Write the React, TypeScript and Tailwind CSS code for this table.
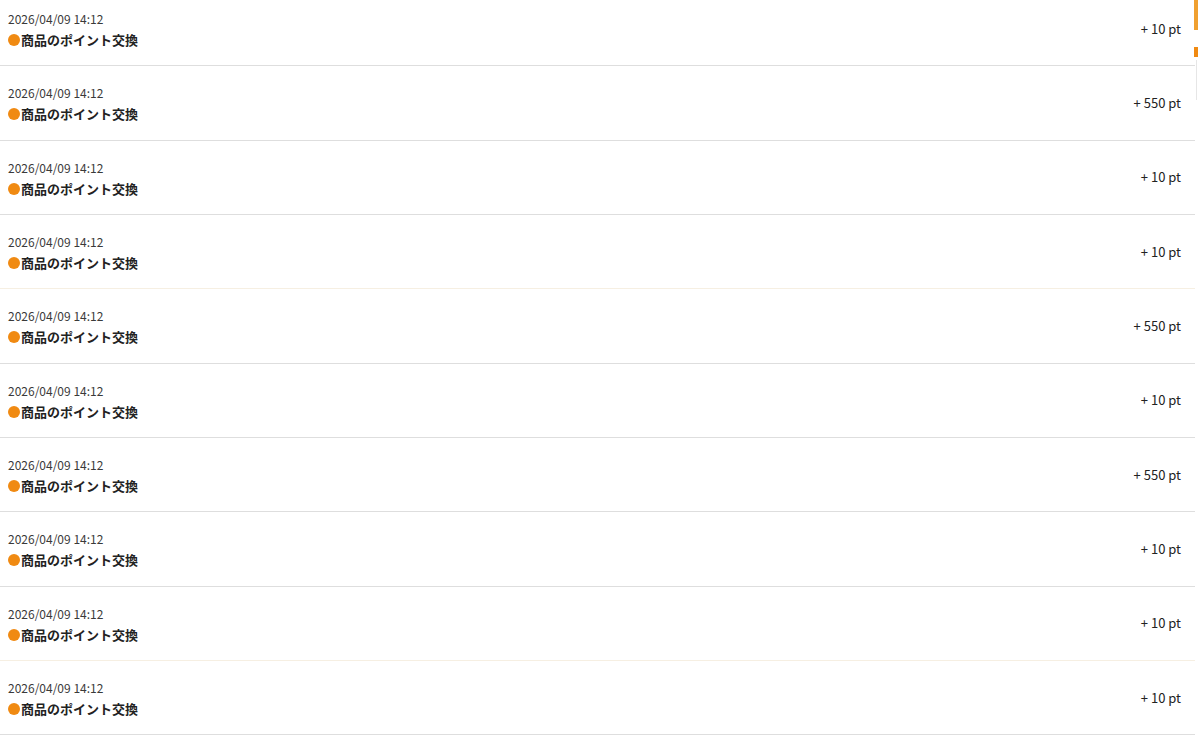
import React from "react";

const rows = [
  { v: "10", line: "border-[#dedede]" },
  { v: "550", line: "border-[#dedede]" },
  { v: "10", line: "border-[#dedede]" },
  { v: "10", line: "border-[#f6efe2]" },
  { v: "550", line: "border-[#dedede]" },
  { v: "10", line: "border-[#dedede]" },
  { v: "550", line: "border-[#dedede]" },
  { v: "10", line: "border-[#dedede]" },
  { v: "10", line: "border-[#f6efe2]" },
  { v: "10", line: "border-[#dedede]" },
];

export default function App() {
  return (
    <div
      className="relative h-[743px] w-[1200px] overflow-hidden bg-white"
      style={{ fontFamily: '"Noto Sans CJK JP", "Noto Sans", sans-serif' }}
    >
      <div className="-mt-[8px] flex w-[1195px] flex-col">
        {rows.map((r, i) => (
          <div
            key={i}
            className={`flex h-[74.33px] shrink-0 items-start justify-between border-b ${r.line} pl-[8px] pr-[14px]`}
          >
            <div className="flex flex-col pt-[19px]">
              <div className="text-[12px] leading-[16px] text-[#3a3a3a]">2026/04/09 14:12</div>
              <div className="mt-[3px] flex items-center text-[13px] font-bold leading-[20px] text-[#222]">
                <span className="mr-[1px] inline-block h-[12px] w-[12px] rounded-full bg-[#f08a12]" />
                商品のポイント交換
              </div>
            </div>
            <div className="self-center text-[13px] leading-[18px] text-[#222]">+ {r.v} pt</div>
          </div>
        ))}
      </div>
      <div className="absolute right-[2px] top-0 h-[30px] w-[4px] bg-[#f0a030]" />
      <div className="absolute right-[2px] top-[47px] h-[10px] w-[4px] bg-[#f08a12]" />
      <div className="absolute right-[3px] top-[60px] h-[40px] w-[1px] bg-[#e6e6e6]" />
    </div>
  );
}
